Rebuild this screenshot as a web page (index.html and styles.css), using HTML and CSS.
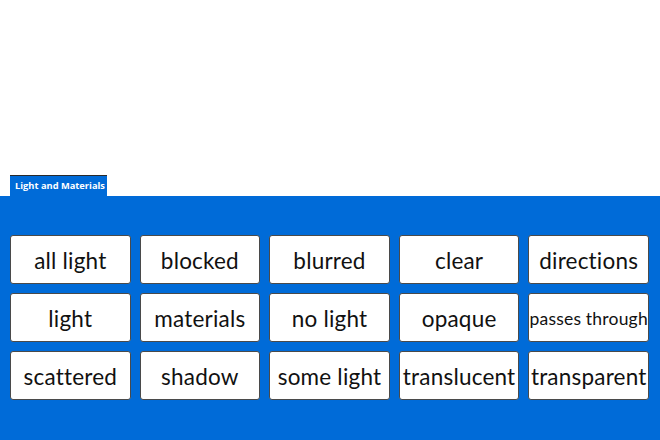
FILE: index.html
```html
<!DOCTYPE html>
<html lang="en">
<head>
<meta charset="utf-8">
<title>Light and Materials</title>
<link rel="stylesheet" href="styles.css">
</head>
<body>
<div class="page">
  <div class="top-space"></div>
  <div class="tab-row">
    <div class="tab">Light and Materials</div>
  </div>
  <div class="board">
    <div class="grid">
      <div class="card">all light</div>
      <div class="card">blocked</div>
      <div class="card">blurred</div>
      <div class="card">clear</div>
      <div class="card">directions</div>
      <div class="card">light</div>
      <div class="card">materials</div>
      <div class="card">no light</div>
      <div class="card">opaque</div>
      <div class="card small">passes through</div>
      <div class="card">scattered</div>
      <div class="card">shadow</div>
      <div class="card">some light</div>
      <div class="card">translucent</div>
      <div class="card">transparent</div>
    </div>
  </div>
</div>
</body>
</html>
```

FILE: styles.css
```css
html, body {
  margin: 0;
  padding: 0;
  background: #ffffff;
}

.page {
  width: 660px;
  height: 440px;
  display: flex;
  flex-direction: column;
}

.top-space {
  height: 175px;
  flex: none;
}

.tab-row {
  height: 21px;
  flex: none;
  padding-left: 10px;
  display: flex;
}

.tab {
  width: 92px;
  padding-left: 5px;
  background: #006bd8;
  border-top: 1px solid #2a2a2a;
  color: #ffffff;
  font-family: "Open Sans", "DejaVu Sans", sans-serif;
  font-weight: 700;
  font-size: 9.3px;
  line-height: 20px;
  white-space: nowrap;
}

.board {
  flex: 1;
  background: #006bd8;
  padding: 39px 11px 0 10px;
}

.grid {
  display: grid;
  grid-template-columns: repeat(5, 1fr);
  grid-auto-rows: 49px;
  gap: 9px;
}

.card {
  background: #ffffff;
  border: 1px solid #4a4a4a;
  border-radius: 3px;
  display: flex;
  align-items: center;
  justify-content: center;
  font-family: "Lato", "Open Sans", sans-serif;
  font-size: 22.5px;
  letter-spacing: 0.2px;
  color: #111111;
  white-space: nowrap;
  padding-top: 2px;
  box-sizing: border-box;
}

.card.small {
  font-size: 17.5px;
}
```
